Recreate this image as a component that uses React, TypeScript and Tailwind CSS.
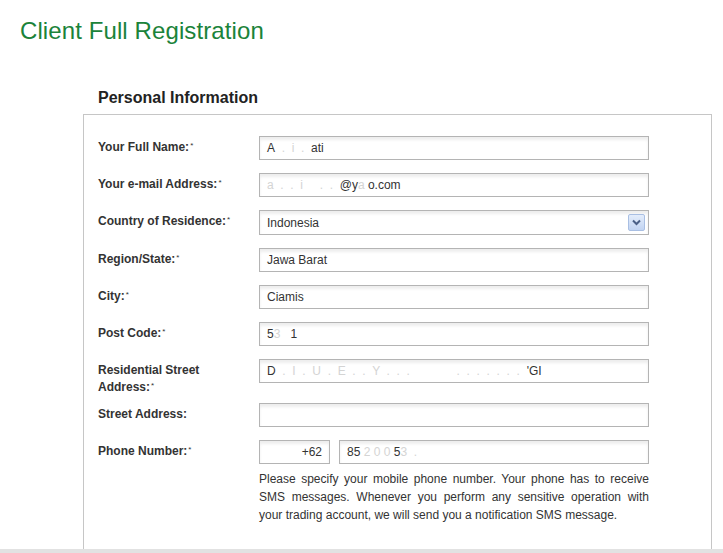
import { ReactNode } from 'react';

function Label({ children, required }: { children: ReactNode; required?: boolean }) {
  return (
    <div className="w-[161px] shrink-0 pt-[3px] text-[12px] leading-[17px] font-bold text-[#333]">
      {children}
      {required && <span className="relative -top-[3px] ml-[1px] text-[8px] font-normal">*</span>}
    </div>
  );
}

function Field({ children, className = 'w-[390px]', right }: { children?: ReactNode; className?: string; right?: boolean }) {
  return (
    <div
      className={`${className} h-[24px] border border-[#b4b4b4] bg-white shadow-[inset_0_3px_3px_rgba(0,0,0,0.07)] flex items-center px-[7px] text-[12px] text-[#333] whitespace-pre ${right ? 'justify-end' : ''}`}
    >
      {children}
    </div>
  );
}

const faint = 'text-[#d4d4d4]';

export default function App() {
  return (
    <div className="w-[723px] h-[553px] bg-white overflow-hidden font-['Liberation_Sans',Arial,sans-serif] flex flex-col">
      <h1 className="pl-5 pt-[17px] text-[24px] leading-[28px] tracking-[0.1px] text-[#1b833a]">Client Full Registration</h1>

      <div className="ml-[83px] w-[629px] flex-1 flex flex-col">
        <h2 className="mt-[43px] pl-[15px] text-[16px] leading-[20px] font-bold text-[#222]">Personal Information</h2>

        <div className="mt-[6px] flex-1 border border-b-0 border-[#c6c6c6] pt-[21px] pl-[14px]">
          <div className="flex h-[37px]">
            <Label required>Your Full Name:</Label>
            <Field>
              A<span className={faint}>  .  i  .</span>  ati
            </Field>
          </div>

          <div className="flex h-[37px]">
            <Label required>Your e-mail Address:</Label>
            <Field>
              <span className={faint}>a  .  .  i     .  .</span>  @y<span className={faint}>a</span> o.com
            </Field>
          </div>

          <div className="flex h-[38px]">
            <Label required>Country of Residence:</Label>
            <div className="w-[390px] h-[25px] border border-[#b4b4b4] bg-white shadow-[inset_0_3px_3px_rgba(0,0,0,0.07)] flex items-center justify-between pl-[7px] pr-[3px] text-[12px] text-[#333]">
              Indonesia
              <span className="w-[17px] h-[17px] rounded-[2px] border border-[#a9bfe3] bg-gradient-to-b from-[#e4edfb] to-[#c2d4f2] flex items-center justify-center">
                <svg width="9" height="7" viewBox="0 0 9 7">
                  <path d="M1 1.5 L4.5 5 L8 1.5" fill="none" stroke="#4a5f86" strokeWidth="2" />
                </svg>
              </span>
            </div>
          </div>

          <div className="flex h-[37px]">
            <Label required>Region/State:</Label>
            <Field>Jawa Barat</Field>
          </div>

          <div className="flex h-[37px]">
            <Label required>City:</Label>
            <Field>Ciamis</Field>
          </div>

          <div className="flex h-[37px]">
            <Label required>Post Code:</Label>
            <Field>
              5<span className={faint}>3</span>   1
            </Field>
          </div>

          <div className="flex h-[44px]">
            <Label required>
              Residential Street
              <br />
              Address:
            </Label>
            <Field>
              D<span className={faint}>  .  I  .  U  .  E  .  .  Y  .  .  .              .  .  .  .  .  .  .</span>  'GI
            </Field>
          </div>

          <div className="flex h-[37px]">
            <Label>Street Address:</Label>
            <Field />
          </div>

          <div className="flex">
            <Label required>Phone Number:</Label>
            <div className="w-[390px]">
              <div className="flex justify-between">
                <Field className="w-[71px]" right>
                  +62
                </Field>
                <Field className="w-[310px]">
                  85<span className={faint}> 2 0 0 </span>5<span className={faint}>3  .</span>
                </Field>
              </div>
              <p className="mt-[6px] text-[12px] leading-[18px] text-[#333] text-justify">
                Please specify your mobile phone number. Your phone has to receive SMS messages. Whenever you perform any
                sensitive operation with your trading account, we will send you a notification SMS message.
              </p>
            </div>
          </div>
        </div>
      </div>

      <div className="h-[4px] shrink-0 bg-[#e2e2e2]" />
    </div>
  );
}
